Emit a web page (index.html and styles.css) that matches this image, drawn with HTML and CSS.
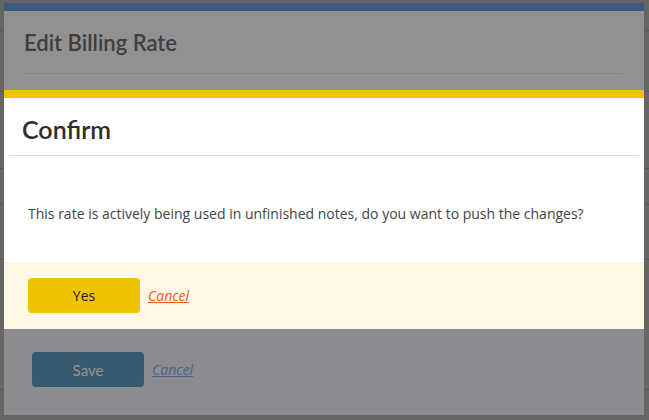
FILE: index.html
```html
<!DOCTYPE html>
<html lang="en">

<head>
    <meta charset="utf-8">
    <title>Edit Billing Rate</title>
    <link rel="stylesheet" href="styles.css">
</head>

<body>

    <!-- page behind the dialogs -->
    <div class="page">
        <div class="page-row" style="height: 30px"></div>
        <div class="page-row" style="height: 60px"></div>
        <div class="page-row" style="height: 76px"></div>
        <div class="page-row" style="height: 35px"></div>
        <div class="page-row" style="height: 54px"></div>
        <div class="page-row" style="height: 129px"></div>
    </div>

    <div class="backdrop backdrop-light"></div>

    <!-- Edit modal -->
    <div class="modal modal-edit">
        <div class="modal-header">
            <h3>Edit Billing Rate</h3>
        </div>
        <div class="modal-body"></div>
        <div class="modal-footer">
            <button class="save-button">Save</button>
            <a href="#" class="cancel-link">Cancel</a>
        </div>
    </div>

    <div class="backdrop backdrop-dark"></div>

    <!-- Confirm modal -->
    <div class="modal modal-confirm">
        <div class="confirm-header">
            <h2>Confirm</h2>
        </div>
        <div class="confirm-body">
            <p>This rate is actively being used in unfinished notes, do you want to push the changes?</p>
        </div>
        <div class="confirm-footer">
            <button class="yes-button">Yes</button>
            <a href="#" class="confirm-cancel">Cancel</a>
        </div>
    </div>

</body>

</html>
```

FILE: styles.css
```css
body {
    font-family: 'Open Sans', sans-serif;
    margin: 0;
    padding: 0;
    background-color: #ffffff;
    height: 420px;
    overflow: hidden;
}

.page {
    display: flex;
    flex-direction: column;
}

.page-row {
    border-bottom: 1px solid #d4d4d4;
}

.backdrop {
    position: fixed;
    top: 0;
    left: 0;
    right: 0;
    bottom: 0;
}

.backdrop-light {
    background-color: rgba(0, 0, 0, 0.3);
}

.backdrop-dark {
    background-color: rgba(0, 0, 0, 0.43);
}

.modal {
    position: fixed;
    left: 4px;
    width: 640px;
    background-color: #fff;
    display: flex;
    flex-direction: column;
}

/* Edit modal */

.modal-edit {
    top: 3px;
    height: 412px;
    border-top: 8px solid #6b9ee1;
    box-sizing: border-box;
}

.modal-header {
    margin: 0 21px 0 20px;
    padding: 19px 0 17px;
    border-bottom: 1px solid #e6e6e6;
}

.modal-header h3 {
    font-family: 'Lato', sans-serif;
    font-size: 22px;
    line-height: 26px;
    font-weight: 600;
    color: #707070;
    margin: 0;
}

.modal-body {
    flex: 1;
}

.modal-footer {
    height: 86px;
    box-sizing: border-box;
    background-color: #f2f7fe;
    display: flex;
    align-items: flex-start;
    gap: 8px;
    padding: 23px 0 0 28px;
}

.save-button {
    width: 112px;
    height: 35px;
    border: none;
    border-radius: 4px;
    background-color: #5d9ec1;
    color: #ffffff;
    font-family: 'Lato', sans-serif;
    font-size: 15px;
}

.cancel-link {
    font-size: 14px;
    line-height: 35px;
    font-style: italic;
    color: #8cb0f8;
}

/* Confirm modal */

.modal-confirm {
    top: 90px;
    height: 239px;
    border-top: 8px solid #f0c300;
    box-sizing: border-box;
}

.confirm-header {
    margin: 0 5px;
    padding: 17px 0 11px 13px;
    border-bottom: 1px solid #e0e0e0;
}

.confirm-header h2 {
    font-family: 'Lato', sans-serif;
    font-size: 25px;
    line-height: 29px;
    font-weight: 600;
    color: #2e2e2e;
    margin: 0;
}

.confirm-body {
    flex: 1;
    padding: 0 24px;
    display: flex;
    align-items: center;
}

.confirm-body p {
    margin: 10px 0 0;
    font-size: 14px;
    line-height: 18px;
    color: #444444;
}

.confirm-footer {
    height: 67px;
    background-color: #fef7e4;
    display: flex;
    align-items: center;
    gap: 8px;
    padding-left: 24px;
}

.yes-button {
    width: 112px;
    height: 35px;
    border: none;
    border-radius: 4px;
    background-color: #f0c300;
    color: #1a1a1a;
    font-family: 'Open Sans', sans-serif;
    font-size: 14px;
}

.confirm-cancel {
    font-size: 14px;
    font-style: italic;
    color: #f05a28;
}
```
